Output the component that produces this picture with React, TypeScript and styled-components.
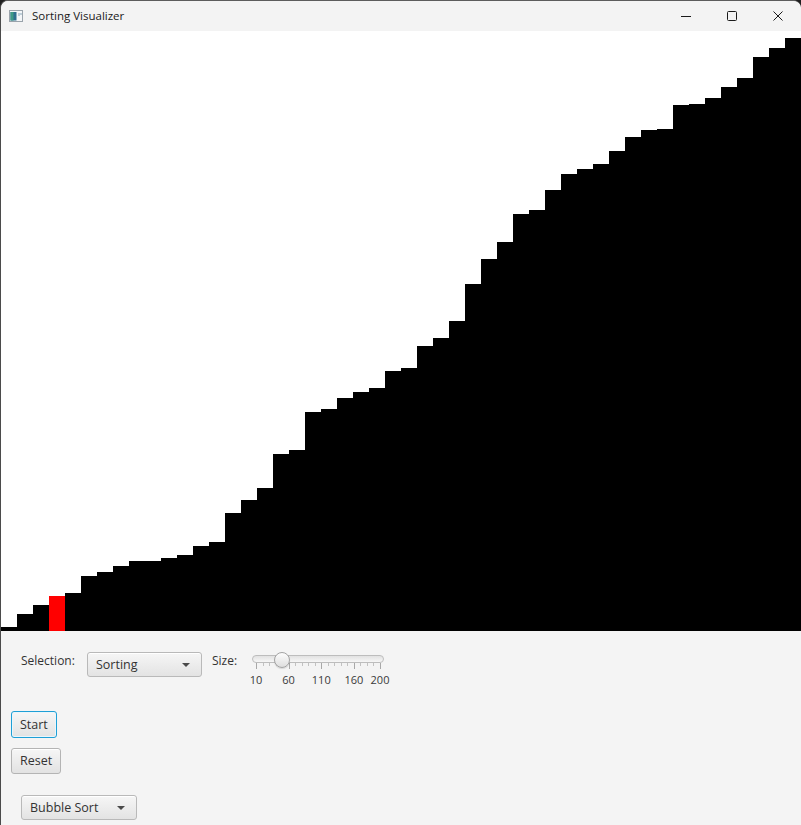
import React from "react";
import styled, { createGlobalStyle } from "styled-components";

const GlobalStyle = createGlobalStyle`
  html, body { margin: 0; padding: 0; background: #1f1f1f; }
  body { font-family: "Open Sans", "Noto Sans", sans-serif; }
  #root { width: 801px; height: 825px; }
`;

const Window = styled.div`
  width: 801px;
  height: 825px;
  box-sizing: border-box;
  display: flex;
  flex-direction: column;
  background: #f4f4f4;
  border-left: 1px solid #4b4b4b;
  border-top: 1px solid #5c5c5c;
  border-radius: 8px 8px 0 0;
  overflow: hidden;
`;

const TitleBar = styled.div`
  height: 30px;
  flex: none;
  display: flex;
  align-items: center;
  background: #f3f3f3;
  color: #1a1a1a;
  font-size: 11.5px;
`;

const AppIcon = styled.svg`
  margin-left: 8px;
  margin-right: 9px;
  flex: none;
`;

const Title = styled.div`
  flex: 1;
  padding-bottom: 1px;
`;

const CaptionButton = styled.div`
  width: 46px;
  height: 30px;
  display: flex;
  align-items: center;
  justify-content: center;
`;

const Chart = styled.div`
  height: 600px;
  flex: none;
  background: #ffffff;
  display: flex;
  align-items: flex-end;
`;

const Bar = styled.div<{ $active?: boolean }>`
  width: 16px;
  flex: none;
  background: ${(p) => (p.$active ? "#ff0000" : "#000000")};
`;

const Panel = styled.div`
  flex: 1;
  display: flex;
  flex-direction: column;
  align-items: flex-start;
  padding-left: 10px;
  background: #f4f4f4;
  color: #333333;
  font-size: 12px;
`;

const TopRow = styled.div`
  margin-top: 21px;
  margin-left: 10px;
  height: 36px;
  display: flex;
  align-items: flex-start;
`;

const FieldLabel = styled.div<{ $w: number }>`
  width: ${(p) => p.$w}px;
  flex: none;
  line-height: 17px;
`;

const Combo = styled.div<{ $w: number; $mt?: number; $ml?: number }>`
  width: ${(p) => p.$w}px;
  height: 25px;
  margin-top: ${(p) => p.$mt ?? 0}px;
  margin-left: ${(p) => p.$ml ?? 0}px;
  box-sizing: border-box;
  display: flex;
  align-items: center;
  justify-content: space-between;
  padding: 0 11px 1px 8px;
  border: 1px solid #b9b9b9;
  border-radius: 3px;
  background: linear-gradient(#f6f6f6, #e3e3e3);
  box-shadow: inset 0 1px 0 #ffffff;
  color: #333333;
  font-size: 12.5px;
  margin-right: 10px;
`;

const Arrow = styled.div`
  width: 0;
  height: 0;
  border-left: 4px solid transparent;
  border-right: 4px solid transparent;
  border-top: 4px solid #4a4a4a;
  margin-top: 2px;
`;

const SliderBox = styled.div`
  position: relative;
  width: 142px;
  height: 36px;
  flex: none;
`;

const Track = styled.div`
  position: absolute;
  left: 4px;
  top: 3px;
  width: 130px;
  height: 6px;
  border: 1px solid #bdbdbd;
  border-radius: 4px;
  background: linear-gradient(#e2e2e2, #f7f7f7);
`;

const Thumb = styled.div`
  position: absolute;
  top: 0;
  width: 16px;
  height: 16px;
  box-sizing: border-box;
  border-radius: 50%;
  border: 1px solid #a3a3a3;
  background: linear-gradient(#fdfdfd, #dedede);
  box-shadow: 0 1px 1px rgba(0, 0, 0, 0.12);
`;

const Ticks = styled.svg`
  position: absolute;
  left: 0;
  top: 11px;
`;

const TickLabel = styled.div`
  position: absolute;
  top: 21px;
  transform: translateX(-50%);
  font-size: 11px;
  line-height: 14px;
  color: #3a3a3a;
`;

const Button = styled.div<{ $focused?: boolean; $mt: number; $h: number }>`
  margin-top: ${(p) => p.$mt}px;
  height: ${(p) => p.$h}px;
  box-sizing: border-box;
  display: flex;
  align-items: center;
  padding: 0 8px 1px 8px;
  border-radius: 3px;
  border: 1px solid ${(p) => (p.$focused ? "#1e9fd6" : "#b4b4b4")};
  background: linear-gradient(#f6f6f6, #e2e2e2);
  box-shadow: ${(p) =>
    p.$focused ? "inset 0 0 0 1px #e9f6fc" : "inset 0 1px 0 #ffffff"};
  font-size: 12.5px;
  color: #333333;
`;

const BAR_TOPS = [
  627, 614, 605, 596, 593, 576, 572, 566, 561, 561, 558, 555, 546, 542, 513,
  500, 488, 454, 450, 412, 409, 398, 392, 388, 371, 368, 346, 338, 321, 284,
  259, 242, 214, 210, 190, 174, 169, 164, 151, 137, 130, 129, 105, 104, 98,
  87, 78, 57, 48, 38,
];

const MIN = 10;
const MAX = 200;
const X0 = 8;
const X1 = 132;
const pos = (v: number) => X0 + ((v - MIN) * (X1 - X0)) / (MAX - MIN);

const Slider: React.FC<{ value: number }> = ({ value }) => {
  const ticks: { x: number; major: boolean }[] = [];
  for (let v = MIN; v <= MAX; v += 10) {
    ticks.push({ x: pos(v), major: (v - MIN) % 50 === 0 || v === MAX });
  }
  const labels = [10, 60, 110, 160, 200];
  return (
    <SliderBox>
      <Track />
      <Ticks width={142} height={8}>
        {ticks.map((t, i) => (
          <line
            key={i}
            x1={Math.round(t.x) + 0.5}
            x2={Math.round(t.x) + 0.5}
            y1={0}
            y2={t.major ? 6 : 3}
            stroke={t.major ? "#a8a8a8" : "#c2c2c2"}
            strokeWidth={1}
          />
        ))}
      </Ticks>
      {labels.map((l) => (
        <TickLabel key={l} style={{ left: pos(l) }}>
          {l}
        </TickLabel>
      ))}
      <Thumb style={{ left: pos(value) - 8 }} />
    </SliderBox>
  );
};

export default function App() {
  return (
    <>
      <GlobalStyle />
      <Window>
        <TitleBar>
          <AppIcon width="14" height="12" viewBox="0 0 14 12">
            <rect x="0.5" y="0.5" width="13" height="11" fill="#f4f6f8" stroke="#9aa3ab" />
            <rect x="1.5" y="2" width="6" height="8.5" fill="#2f6f8f" />
            <rect x="1.5" y="2" width="3" height="8.5" fill="#3f9a86" />
            <line x1="10" y1="3" x2="10" y2="6" stroke="#8aa7b8" />
            <line x1="12" y1="3" x2="12" y2="5" stroke="#8aa7b8" />
          </AppIcon>
          <Title>Sorting Visualizer</Title>
          <CaptionButton>
            <svg width="12" height="12" viewBox="0 0 12 12">
              <line x1="1" y1="6.5" x2="11" y2="6.5" stroke="#1a1a1a" strokeWidth="1" />
            </svg>
          </CaptionButton>
          <CaptionButton>
            <svg width="12" height="12" viewBox="0 0 12 12">
              <rect x="1.5" y="1.5" width="9" height="9" rx="1" fill="none" stroke="#1a1a1a" strokeWidth="1" />
            </svg>
          </CaptionButton>
          <CaptionButton>
            <svg width="12" height="12" viewBox="0 0 12 12">
              <path d="M1.5 1.5 L10.5 10.5 M10.5 1.5 L1.5 10.5" stroke="#1a1a1a" strokeWidth="1" />
            </svg>
          </CaptionButton>
        </TitleBar>
        <Chart>
          {BAR_TOPS.map((t, i) => (
            <Bar key={i} $active={i === 3} style={{ height: 631 - t }} />
          ))}
        </Chart>
        <Panel>
          <TopRow>
            <FieldLabel $w={66}>Selection:</FieldLabel>
            <Combo $w={115}>
              <span>Sorting</span>
              <Arrow />
            </Combo>
            <FieldLabel $w={36}>Size:</FieldLabel>
            <Slider value={50} />
          </TopRow>
          <Button $focused $mt={23} $h={27}>
            Start
          </Button>
          <Button $mt={10} $h={26}>
            Reset
          </Button>
          <Combo $w={116} $mt={21} $ml={10}>
            <span>Bubble Sort</span>
            <Arrow />
          </Combo>
        </Panel>
      </Window>
    </>
  );
}
